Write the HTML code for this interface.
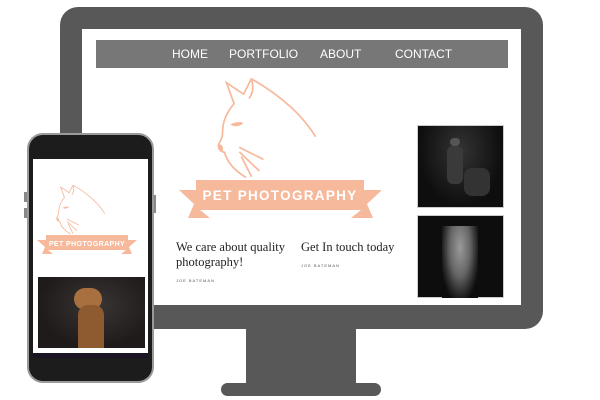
<!DOCTYPE html>
<html><head><meta charset="utf-8"><style>
*{margin:0;padding:0;box-sizing:border-box}
body{width:600px;height:400px;background:#fff;position:relative;overflow:hidden;font-family:"Liberation Sans",sans-serif}
.a{position:absolute}
.nav span{position:absolute;top:47px;color:#fff;font-size:12px}
.serif{font-family:"Liberation Serif",serif;color:#222;font-size:12.5px;line-height:15px}
.tiny{font-size:4px;letter-spacing:1px;color:#555}
</style></head><body>
<svg width="0" height="0" style="position:absolute"><defs>
<symbol id="cat" viewBox="0 0 110 105">
<g fill="none" stroke="#f7b99c" stroke-width="1.8" stroke-linecap="round">
<path d="M30 16 L12 4 L20 26 Q8 40 8 55 Q8 62 4 68 Q2 75 10 77 Q14 92 32 103"/>
<path d="M30 16 L38 0 Q60 12 80 30 Q95 44 105 60"/>
<path d="M38 0 Q42 12 36 20"/>
<path d="M26 72 L50 84 M26 77 L46 96 M28 82 L38 102"/>
</g>
<path d="M4 68 Q2 74 8 76 Q10 70 4 68Z" fill="#f7b99c"/>
<path d="M16 48 Q22 44 30 46 Q24 52 16 48Z" fill="#f7b99c"/>
</symbol>
</defs></svg>

<!-- monitor -->
<div class="a" style="left:60px;top:7px;width:483px;height:322px;background:#585858;border-radius:18px"></div>
<div class="a" style="left:246px;top:328px;width:110px;height:58px;background:#585858"></div>
<div class="a" style="left:221px;top:383px;width:160px;height:13px;background:#585858;border-radius:7px"></div>
<div class="a" style="left:82px;top:29px;width:439px;height:276px;background:#fff"></div>
<div class="a nav" style="left:96px;top:40px;width:412px;height:28px;background:#777"></div>
<div class="nav"><span style="left:172px">HOME</span><span style="left:229px">PORTFOLIO</span><span style="left:320px">ABOUT</span><span style="left:395px">CONTACT</span></div>

<svg class="a" style="left:215px;top:78px" width="105" height="102"><use href="#cat"/></svg>
<svg class="a" style="left:178px;top:180px" width="205" height="40">
<polygon points="1,10 22,10 22,30 32,38 10,38 16,24" fill="#f7b99c"/>
<polygon points="204,10 183,10 183,30 173,38 195,38 189,24" fill="#f7b99c"/>
<rect x="18" y="0" width="168" height="30" fill="#f7b99c"/>
<text x="102" y="20" text-anchor="middle" fill="#fff" font-family="Liberation Sans" font-weight="bold" font-size="13.5" letter-spacing="1.3">PET PHOTOGRAPHY</text>
</svg>

<div class="a serif" style="left:176px;top:240px">We care about quality<br>photography!</div>
<div class="a tiny" style="left:176px;top:278px">JOE BATEMAN</div>
<div class="a serif" style="left:301px;top:240px">Get In touch today</div>
<div class="a tiny" style="left:301px;top:263px">JOE BATEMAN</div>

<div class="a" style="left:417px;top:125px;width:87px;height:83px;background:radial-gradient(ellipse at 50% 30%,#333,#0e0e0e 70%);border:1px solid #ccc"></div>
<div class="a" style="left:450px;top:138px;width:10px;height:8px;background:#555;border-radius:4px"></div>
<div class="a" style="left:447px;top:146px;width:16px;height:38px;background:#3a3a3a;border-radius:6px"></div>
<div class="a" style="left:464px;top:168px;width:26px;height:28px;background:#333;border-radius:8px"></div>
<div class="a" style="left:417px;top:215px;width:87px;height:83px;background:#0d0d0d;border:1px solid #ccc"></div>
<div class="a" style="left:442px;top:226px;width:36px;height:72px;background:radial-gradient(ellipse at 50% 30%,#9a9a9a,#666 40%,#2a2a2a 65%,#0d0d0d 80%)"></div>

<!-- phone -->
<div class="a" style="left:24px;top:192px;width:4px;height:10px;background:#888"></div>
<div class="a" style="left:24px;top:208px;width:4px;height:10px;background:#888"></div>
<div class="a" style="left:153px;top:195px;width:3px;height:18px;background:#888"></div>
<div class="a" style="left:27px;top:133px;width:127px;height:250px;background:#1c1c1c;border:2px solid #9a9a9a;border-radius:16px"></div>
<div class="a" style="left:33px;top:159px;width:115px;height:194px;background:#fff"></div>
<div class="a" style="left:33px;top:353px;width:115px;height:5px;background:#1a1424"></div>
<svg class="a" style="left:55px;top:185px" width="52" height="50"><use href="#cat"/></svg>
<svg class="a" style="left:37px;top:235px" width="100" height="20">
<polygon points="0,5 11,5 11,15 16,19 5,19 8,12" fill="#f7b99c"/>
<polygon points="100,5 89,5 89,15 84,19 95,19 92,12" fill="#f7b99c"/>
<rect x="9" y="0" width="82" height="15" fill="#f7b99c"/>
<text x="50" y="11" text-anchor="middle" fill="#fff" font-family="Liberation Sans" font-weight="bold" font-size="7" letter-spacing="0.4">PET PHOTOGRAPHY</text>
</svg>
<div class="a" style="left:38px;top:277px;width:107px;height:71px;background:radial-gradient(ellipse at 55% 40%,#3a3534,#1f1b1b 70%)"></div>
<div class="a" style="left:74px;top:288px;width:28px;height:22px;background:#a8703f;border-radius:12px"></div>
<div class="a" style="left:78px;top:305px;width:26px;height:43px;background:#8e5a30;border-radius:10px 10px 0 0"></div>
</body></html>
